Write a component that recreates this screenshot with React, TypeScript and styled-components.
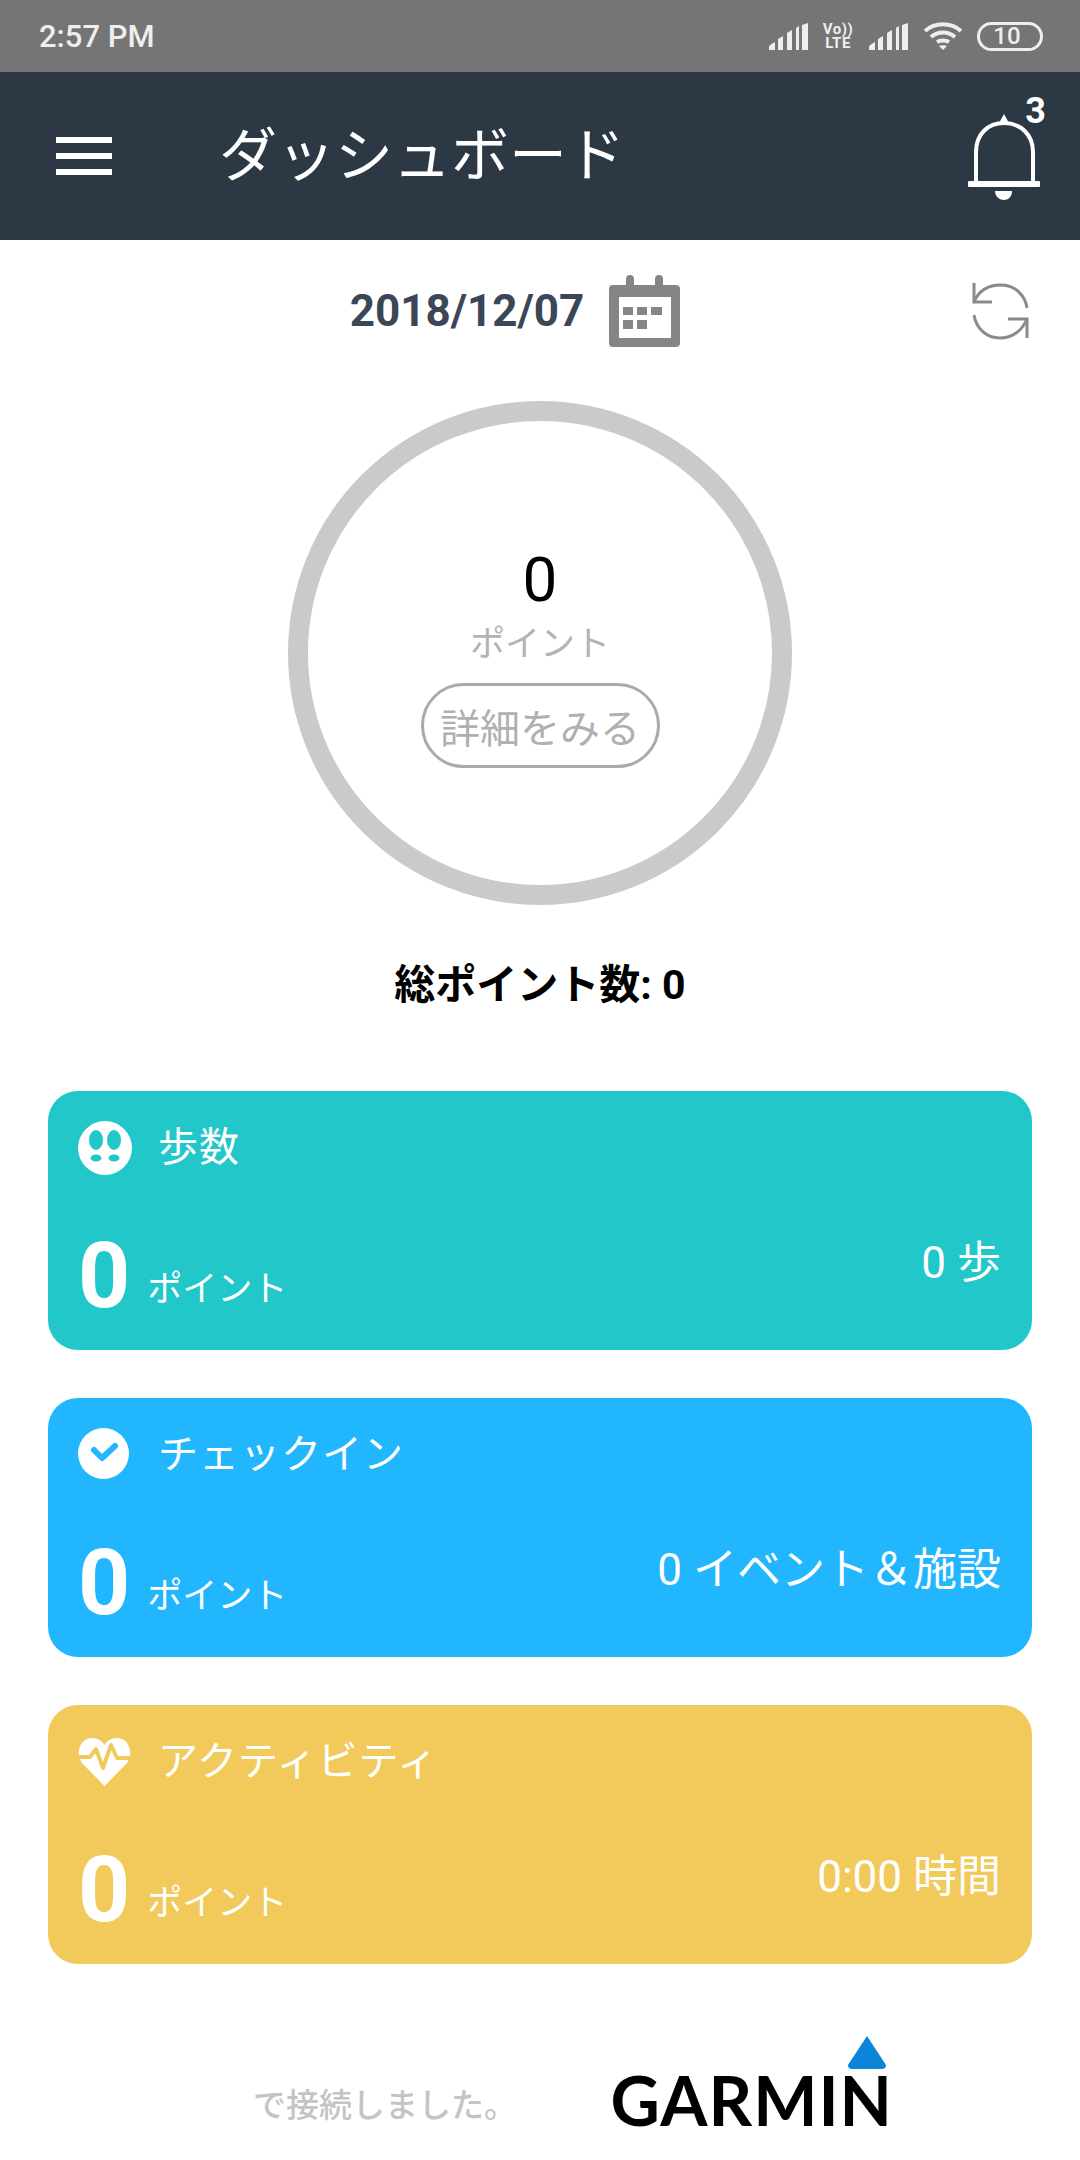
import React from 'react';
import styled, { createGlobalStyle } from 'styled-components';

const GlobalStyle = createGlobalStyle`
    html, body {
        margin: 0;
        padding: 0;
        background: #ffffff;
        font-family: Roboto, "Noto Sans CJK JP", sans-serif;
    }
`;

const Page = styled.div`
    width: 1080px;
    height: 2160px;
    overflow: hidden;
    background: #ffffff;
`;

const StatusBar = styled.div`
    height: 72px;
    background: #757575;
    color: #eeeeee;
    display: flex;
    align-items: center;
    justify-content: space-between;
    padding: 0 37px 0 39px;
    box-sizing: border-box;
`;

const Clock = styled.span`
    font-size: 31px;
    font-weight: 500;
`;

const StatusIcons = styled.div`
    display: flex;
    align-items: center;
`;

const VoLte = styled.span`
    display: flex;
    flex-direction: column;
    align-items: center;
    width: 32px;
    margin: 0 15px 0 14px;
    font-size: 15px;
    line-height: 14px;
    font-weight: 700;
    letter-spacing: 0.5px;
`;

const Battery = styled.span`
    width: 66px;
    height: 29px;
    margin-left: 14px;
    box-sizing: border-box;
    border: 3px solid #eeeeee;
    border-radius: 15px;
    display: flex;
    align-items: center;
    justify-content: center;
    font-size: 24px;
    font-weight: 500;
    padding-right: 6px;
`;

const Header = styled.header`
    height: 168px;
    background: #2d3845;
    display: flex;
    align-items: center;
    padding: 0 40px 0 56px;
    box-sizing: border-box;
`;

const MenuButton = styled.div`
    width: 56px;
    display: flex;
    flex-direction: column;
    gap: 10px;
    margin-right: 107px;
`;

const MenuBar = styled.span`
    height: 6px;
    background: #ffffff;
`;

const HeaderTitle = styled.h1`
    flex: 1;
    margin: 0;
    color: #ffffff;
    font-size: 58px;
    line-height: 1;
    font-weight: 400;
`;

const BellWrap = styled.div`
    position: relative;
    width: 72px;
    height: 86px;
    margin-top: 2px;
`;

const BellBadge = styled.span`
    position: absolute;
    top: -21px;
    right: -6px;
    color: #ffffff;
    font-size: 36px;
    line-height: 36px;
    font-weight: 700;
`;

const DateRow = styled.div`
    display: grid;
    grid-template-columns: 1fr auto 1fr;
    align-items: center;
    padding: 35px 50px 0 0;
`;

const DateGroup = styled.div`
    grid-column: 2;
    display: flex;
    align-items: center;
    gap: 25px;
`;

const DateText = styled.span`
    color: #3b4657;
    font-size: 44px;
    font-weight: 700;
`;

const RefreshIcon = styled.svg`
    justify-self: end;
    display: block;
`;

const Ring = styled.div`
    width: 504px;
    height: 504px;
    margin: 54px auto 0;
    box-sizing: border-box;
    border: 20px solid #cacaca;
    border-radius: 50%;
    display: flex;
    flex-direction: column;
    align-items: center;
    padding-top: 123px;
`;

const RingScore = styled.div`
    color: #000000;
    font-size: 62px;
    line-height: 72px;
`;

const RingLabel = styled.div`
    margin-top: 9px;
    color: #b3b3b3;
    font-size: 35px;
    line-height: 40px;
`;

const DetailButton = styled.div`
    margin-top: 18px;
    width: 239px;
    height: 85px;
    box-sizing: border-box;
    border: 3px solid #aaaaaa;
    border-radius: 43px;
    color: #b0b0b0;
    font-size: 40px;
    display: flex;
    align-items: center;
    justify-content: center;
`;

const TotalPoints = styled.div`
    margin-top: 55px;
    text-align: center;
    color: #000000;
    font-size: 41px;
    line-height: 50px;
    font-weight: 700;
`;

const CardList = styled.div`
    margin-top: 81px;
    padding: 0 48px;
    display: flex;
    flex-direction: column;
    gap: 48px;
`;

const Card = styled.div<{ $color: string }>`
    height: 259px;
    box-sizing: border-box;
    background: ${p => p.$color};
    border-radius: 30px;
    color: #ffffff;
    padding: 30px 31px 0 30px;
    display: flex;
    flex-direction: column;
`;

const CardHead = styled.div`
    display: flex;
    align-items: center;
    gap: 26px;
    height: 54px;
`;

const CardTitle = styled.span`
    font-size: 40px;
    line-height: 54px;
    letter-spacing: 1px;
`;

const CardFoot = styled.div`
    margin-top: 56px;
    display: flex;
    align-items: flex-end;
`;

const CardPoints = styled.span`
    font-size: 91px;
    line-height: 91px;
    font-weight: 700;
`;

const CardPointsLabel = styled.span`
    margin: 0 0 12px 17px;
    font-size: 35px;
    line-height: 40px;
`;

const CardValue = styled.span`
    margin: 0 0 34px auto;
    font-size: 44px;
    line-height: 50px;
`;

const Footer = styled.div`
    margin-top: 72px;
    padding-left: 253px;
    display: flex;
    align-items: flex-end;
`;

const FooterText = styled.span`
    color: #c4c4c4;
    font-size: 33px;
    line-height: 44px;
    font-weight: 500;
    margin-bottom: 3px;
`;

const Logo = styled.div`
    margin-left: 50px;
    width: 326px;
    display: flex;
    flex-direction: column;
    align-items: flex-end;
`;

const LogoMark = styled.svg`
    display: block;
    margin-right: 7px;
`;

const LogoText = styled.span`
    color: #000000;
    font-family: Lato, sans-serif;
    font-size: 68px;
    line-height: 62px;
    font-weight: 700;
    letter-spacing: 1px;
    white-space: nowrap;
`;

const SignalIcon = () => (
    <svg width="39" height="27" viewBox="0 0 39 27" fill="#eeeeee">
        <path d="M0 24 Q0 22 6 19 V27 H0Z" />
        <path d="M9 16 L14 13 V27 H9Z" />
        <path d="M18 10 L23 7 V27 H18Z" />
        <path d="M27 5 L30 3 V27 H27Z" />
        <path d="M33 2 L39 0 V27 H33Z" />
    </svg>
);

const WifiIcon = () => (
    <svg width="40" height="28" viewBox="0 0 40 28" fill="none" stroke="#eeeeee" strokeWidth="4">
        <path d="M2 9 C12 0 28 0 38 9" />
        <path d="M8 15 C15 9 25 9 32 15" />
        <path d="M14 20 C17 18 23 18 26 20" />
        <path d="M20 28 L16 24 C18 23 22 23 24 24Z" fill="#eeeeee" stroke="none" />
    </svg>
);

const BellIcon = () => (
    <svg width="72" height="86" viewBox="0 0 72 86" fill="none">
        <path d="M36 0 L41 9 H31Z" fill="#ffffff" />
        <path d="M8 68 V38 C8 20 20 9 36 9 C52 9 65 20 65 38 V68" stroke="#ffffff" strokeWidth="4" />
        <rect x="0" y="67" width="72" height="6" rx="1" fill="#ffffff" />
        <path d="M27 77 H44 C44 83 40 86 36 86 C32 86 27 83 27 77Z" fill="#ffffff" />
    </svg>
);

const CalendarIcon = () => (
    <svg width="71" height="72" viewBox="0 0 71 72">
        <rect x="0" y="10" width="71" height="62" rx="4" fill="#858585" />
        <rect x="17" y="0" width="8" height="20" rx="4" fill="#858585" />
        <rect x="46" y="0" width="8" height="20" rx="4" fill="#858585" />
        <rect x="10" y="22" width="52" height="41" fill="#ffffff" />
        <g fill="#858585">
            <rect x="14" y="32" width="10" height="8" />
            <rect x="28" y="32" width="10" height="8" />
            <rect x="42" y="32" width="11" height="8" />
            <rect x="14" y="45" width="10" height="9" />
            <rect x="28" y="45" width="10" height="9" />
        </g>
    </svg>
);

const FootIcon = ({ color }: { color: string }) => (
    <svg width="54" height="54" viewBox="0 0 54 54">
        <circle cx="27" cy="27" r="27" fill="#ffffff" />
        <g fill={color}>
            <ellipse cx="18" cy="19" rx="7" ry="10" />
            <ellipse cx="36" cy="19" rx="7" ry="10" />
            <ellipse cx="18" cy="37" rx="5.5" ry="3.5" />
            <ellipse cx="36" cy="37" rx="5.5" ry="3.5" />
        </g>
    </svg>
);

const CheckIcon = ({ color }: { color: string }) => (
    <svg width="54" height="54" viewBox="0 0 54 54">
        <circle cx="25.5" cy="25.5" r="25.5" fill="#ffffff" />
        <path d="M16 22 L24 30 L37 18" fill="none" stroke={color} strokeWidth="6" strokeLinecap="round" strokeLinejoin="round" />
    </svg>
);

const HeartIcon = ({ color }: { color: string }) => (
    <svg width="54" height="54" viewBox="0 0 54 54">
        <path d="M26.5 51 L4 28 C-3 18 2 3 14 3 C20 3 24 6 26.5 10 C29 6 33 3 39 3 C51 3 56 18 49 28Z" fill="#ffffff" />
        <path d="M0 22 H12 L18 14 L25 33 L33 10 L39 23 H53" fill="none" stroke={color} strokeWidth="4" strokeLinejoin="round" />
    </svg>
);

const cards = [
    { title: '歩数', value: '0 歩', color: '#22c7ca', icon: FootIcon },
    { title: 'チェックイン', value: '0 イベント＆施設', color: '#22b6ff', icon: CheckIcon },
    { title: 'アクティビティ', value: '0:00 時間', color: '#f2ca5b', icon: HeartIcon }
];

export default function App() {
    return (
        <Page>
            <GlobalStyle />
            <StatusBar>
                <Clock>2:57 PM</Clock>
                <StatusIcons>
                    <SignalIcon />
                    <VoLte><span>Vo))</span><span>LTE</span></VoLte>
                    <SignalIcon />
                    <span style={ { width: 15 } } />
                    <WifiIcon />
                    <Battery>10</Battery>
                </StatusIcons>
            </StatusBar>

            <Header>
                <MenuButton>
                    <MenuBar />
                    <MenuBar />
                    <MenuBar />
                </MenuButton>
                <HeaderTitle>ダッシュボード</HeaderTitle>
                <BellWrap>
                    <BellIcon />
                    <BellBadge>3</BellBadge>
                </BellWrap>
            </Header>

            <DateRow>
                <DateGroup>
                    <DateText>2018/12/07</DateText>
                    <CalendarIcon />
                </DateGroup>
                <RefreshIcon width="59" height="57" viewBox="0 0 59 57" fill="none" stroke="#8a8a8a" strokeWidth="3">
                    <path d="M3 0 V19 H21" />
                    <path d="M3 19 C8 7 18 2 30 2 C44 2 54 12 56 25" />
                    <path d="M56 55 V36 H37" />
                    <path d="M56 36 C51 48 41 55 29 55 C15 55 5 45 3 32" />
                </RefreshIcon>
            </DateRow>

            <Ring>
                <RingScore>0</RingScore>
                <RingLabel>ポイント</RingLabel>
                <DetailButton>詳細をみる</DetailButton>
            </Ring>

            <TotalPoints>総ポイント数: 0</TotalPoints>

            <CardList>
                {
                    cards.map(card => (
                        <Card key={ card.title } $color={ card.color }>
                            <CardHead>
                                <card.icon color={ card.color } />
                                <CardTitle>{ card.title }</CardTitle>
                            </CardHead>
                            <CardFoot>
                                <CardPoints>0</CardPoints>
                                <CardPointsLabel>ポイント</CardPointsLabel>
                                <CardValue>{ card.value }</CardValue>
                            </CardFoot>
                        </Card>
                    ))
                }
            </CardList>

            <Footer>
                <FooterText>で接続しました。</FooterText>
                <Logo>
                    <LogoMark width="38" height="33" viewBox="0 0 38 33">
                        <path d="M19 0 L38 29 Q38 33 34 33 H4 Q0 33 0 29Z" fill="#0a85d9" />
                    </LogoMark>
                    <LogoText>GARMIN</LogoText>
                </Logo>
            </Footer>
        </Page>
    );
}
